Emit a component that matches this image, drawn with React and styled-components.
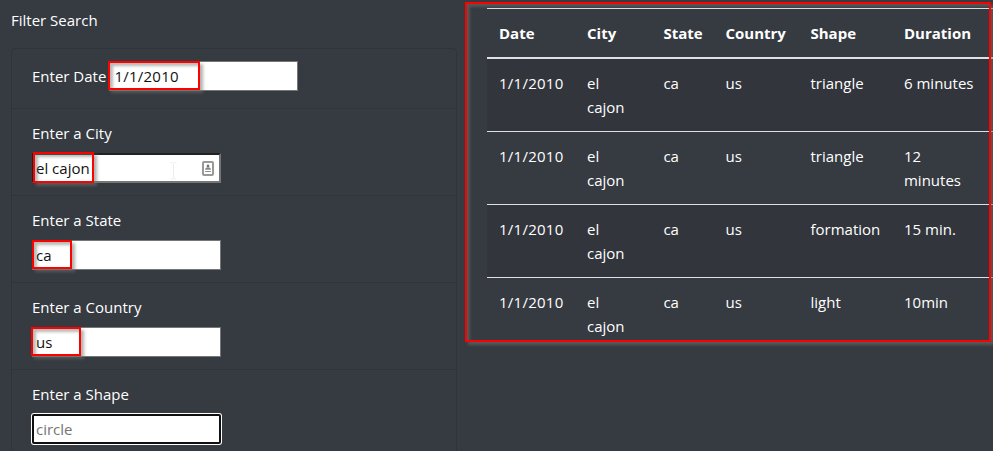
import React from "react";
import styled, { createGlobalStyle, css } from "styled-components";

const GlobalStyle = createGlobalStyle`
  *, *::before, *::after { box-sizing: border-box; }
  body {
    margin: 0;
    overflow: hidden;
    background: #363a41;
    color: #fff;
    font-family: "Open Sans", "Noto Sans", sans-serif;
    font-size: 15px;
    line-height: 24px;
  }
`;

const Page = styled.div`
  display: flex;
  align-items: flex-start;
  width: 993px;
  height: 451px;
  overflow: hidden;
`;

const FilterColumn = styled.aside`
  flex: 0 0 446px;
  margin-left: 11px;
  padding-top: 8px;
`;

const Title = styled.p`
  margin: 0 0 16px;
`;

const FilterList = styled.ul`
  list-style: none;
  margin: 0;
  padding: 0;
  border: 1px solid #30343a;
  border-radius: 4px;
`;

const FilterItem = styled.li`
  display: flex;
  flex-direction: ${(p) => (p.$inline ? "row" : "column")};
  align-items: ${(p) => (p.$inline ? "center" : "flex-start")};
  gap: ${(p) => (p.$inline ? "0" : "8px")};
  height: ${(p) => (p.$inline ? "60px" : "87px")};
  padding: ${(p) => (p.$inline ? "6px 20px 12px" : "12px 20px")};
  border-bottom: 1px solid #30343a;
`;

const Label = styled.label`
  width: ${(p) => (p.$width ? `${p.$width}px` : "auto")};
  white-space: nowrap;
`;

const Field = styled.div`
  position: relative;
  width: 189px;
  height: 30px;
`;

const Input = styled.input`
  display: block;
  width: 100%;
  height: 100%;
  margin: 0;
  padding: 1px 3px;
  border: 1px solid #767676;
  border-radius: 0;
  outline: none;
  background: #fff;
  color: #111;
  font: inherit;
  letter-spacing: ${(p) => (p.$numeric ? "0.25px" : "normal")};
  &::placeholder { color: #757575; opacity: 1; }
  ${(p) => p.$numeric && css`padding-left: 4px;`}
  ${(p) => p.$look === "inset" && css`
    padding: 0 2px;
    border: 2px solid;
    border-color: #222 #767676 #767676 #222;
  `}
  ${(p) => p.$look === "focus" && css`
    padding: 0 2px;
    border: 2px solid #101010;
    border-radius: 2px;
    box-shadow: 0 0 0 1px #fff;
  `}
`;

const Highlight = styled.div`
  position: absolute;
  left: ${(p) => p.$x}px;
  top: ${(p) => p.$y}px;
  width: ${(p) => p.$w}px;
  height: ${(p) => p.$h}px;
  border: 2px solid #f00;
  box-shadow: 3px 3px 3px rgba(115, 115, 110, 0.55),
    inset 3px 3px 3px rgba(115, 115, 110, 0.5);
  pointer-events: none;
`;

const ContactIcon = styled.svg`
  position: absolute;
  left: 170px;
  top: 8px;
`;

const TextCursor = styled.svg`
  position: absolute;
  left: 138px;
  top: 9px;
`;

const Results = styled.main`
  position: relative;
  flex: 0 0 506px;
  margin-left: 30px;
  padding-top: 8px;
`;

const Table = styled.div`
  border-top: 1px solid #dee2e6;
`;

const Row = styled.div`
  display: grid;
  grid-template-columns: 88px 76.4px 62.1px 85px 93.5px 101px;
  height: ${(p) => (p.$last ? 72 : 73)}px;
  background: ${(p) => (p.$striped ? "#32363c" : "transparent")};
  border-bottom: ${(p) => (p.$last ? "0" : "1px solid #dee2e6")};
`;

const HeaderRow = styled(Row)`
  height: 50px;
  border-bottom: 2px solid #dee2e6;
  font-weight: 700;
`;

const Cell = styled.div`
  padding: 12px 0 12px 12px;
  white-space: pre-line;
  letter-spacing: ${(p) => (p.$numeric ? "0.25px" : "normal")};
`;

const filters = [
  { label: "Enter Date", value: "1/1/2010", inline: true, mark: [-1, 0, 92, 29] },
  { label: "Enter a City", value: "el cajon", look: "inset", mark: [1, -1, 61, 31] },
  { label: "Enter a State", value: "ca", mark: [0, 0, 40, 29] },
  { label: "Enter a Country", value: "us", mark: [-1, 0, 50, 29] },
  { label: "Enter a Shape", placeholder: "circle", look: "focus" },
];

const columns = ["Date", "City", "State", "Country", "Shape", "Duration"];

const sightings = [
  ["1/1/2010", "el\ncajon", "ca", "us", "triangle", "6 minutes"],
  ["1/1/2010", "el\ncajon", "ca", "us", "triangle", "12\nminutes"],
  ["1/1/2010", "el\ncajon", "ca", "us", "formation", "15 min."],
  ["1/1/2010", "el\ncajon", "ca", "us", "light", "10min"],
];

function Filter({ label, value, placeholder, inline, look, mark }) {
  return (
    <FilterItem $inline={inline}>
      <Label $width={inline ? 77.4 : undefined}>{label}</Label>
      <Field>
        <Input
          $look={look}
          $numeric={inline}
          defaultValue={value}
          placeholder={placeholder}
          aria-label={label}
        />
        {look === "inset" && (
          <>
            <TextCursor width="8" height="18" viewBox="0 0 8 18" fill="none" stroke="#ededed">
              <path d="M.5.5h2l1 1 1-1h2M3.5 1.5v15M.5 17h2l1-1 1 1h2" />
            </TextCursor>
            <ContactIcon width="12" height="15" viewBox="0 0 12 15">
              <rect x="1" y="1" width="10" height="13" rx="1" fill="#fff" stroke="#999" strokeWidth="2" />
              <circle cx="6" cy="5" r="1.4" fill="#777" />
              <path d="M3.2 8.7V7.4Q6 5.2 8.8 7.4v1.3zM3.2 10h5.6v1H3.2z" fill="#888" />
            </ContactIcon>
          </>
        )}
        {mark && <Highlight $x={mark[0]} $y={mark[1]} $w={mark[2]} $h={mark[3]} />}
      </Field>
    </FilterItem>
  );
}

export default function App() {
  return (
    <>
      <GlobalStyle />
      <Page>
        <FilterColumn>
          <Title>Filter Search</Title>
          <FilterList>
            {filters.map((f) => <Filter key={f.label} {...f} />)}
          </FilterList>
        </FilterColumn>
        <Results>
          <Table>
            <HeaderRow>
              {columns.map((c) => <Cell key={c}>{c}</Cell>)}
            </HeaderRow>
            {sightings.map((row, i) => (
              <Row key={i} $striped={i % 2 === 0} $last={i === sightings.length - 1}>
                {row.map((text, j) => <Cell key={j} $numeric={j === 0}>{text}</Cell>)}
              </Row>
            ))}
          </Table>
          <Highlight $x={-22} $y={2} $w={526} $h={340} />
        </Results>
      </Page>
    </>
  );
}
